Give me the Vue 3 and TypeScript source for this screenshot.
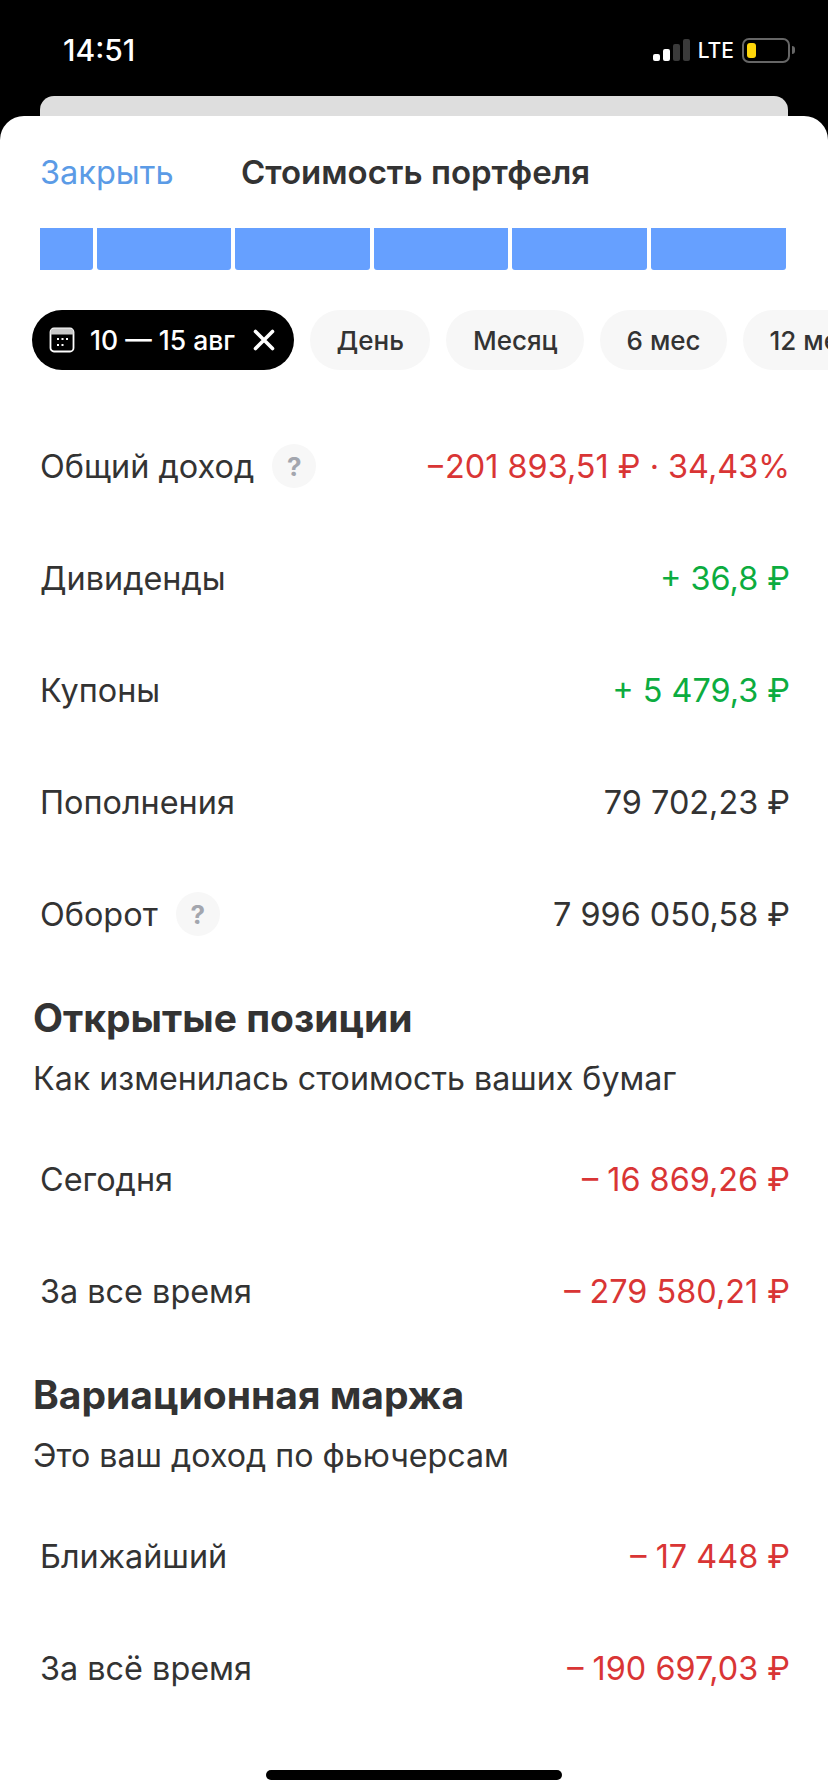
<script setup lang="ts">
interface Row {
  label: string
  value: string
  tone?: 'red' | 'green'
  hint?: boolean
}

interface Section {
  title: string
  text: string
  rows: Row[]
}

const bars = [53, 134, 135, 134, 135, 135]
const periods = ['День', 'Месяц', '6 мес', '12 мес']

const summary: Row[] = [
  { label: 'Общий доход', value: '−201 893,51 ₽ · 34,43%', tone: 'red', hint: true },
  { label: 'Дивиденды', value: '+ 36,8 ₽', tone: 'green' },
  { label: 'Купоны', value: '+ 5 479,3 ₽', tone: 'green' },
  { label: 'Пополнения', value: '79 702,23 ₽' },
  { label: 'Оборот', value: '7 996 050,58 ₽', hint: true }
]

const sections: Section[] = [
  {
    title: 'Открытые позиции',
    text: 'Как изменилась стоимость ваших бумаг',
    rows: [
      { label: 'Сегодня', value: '– 16 869,26 ₽', tone: 'red' },
      { label: 'За все время', value: '– 279 580,21 ₽', tone: 'red' }
    ]
  },
  {
    title: 'Вариационная маржа',
    text: 'Это ваш доход по фьючерсам',
    rows: [
      { label: 'Ближайший', value: '– 17 448 ₽', tone: 'red' },
      { label: 'За всё время', value: '– 190 697,03 ₽', tone: 'red' }
    ]
  }
]
</script>

<template>
  <div class="screen">
    <div class="status">
      <span class="time">14:51</span>
      <div class="status-right">
        <div class="signal">
          <i class="on s1"></i><i class="on s2"></i><i class="s3"></i><i class="s4"></i>
        </div>
        <span class="lte">LTE</span>
        <div class="battery"><div class="charge"></div></div>
        <div class="battery-cap"></div>
      </div>
    </div>

    <div class="back-card"></div>

    <div class="sheet">
      <div class="header">
        <span class="close">Закрыть</span>
        <span class="title">Стоимость портфеля</span>
      </div>

      <div class="bars">
        <div
          v-for="(w, i) in bars"
          :key="i"
          class="bar"
          :style="{ width: w + 'px' }"
        ></div>
      </div>

      <div class="chips">
        <div class="chip chip-active">
          <svg class="cal" width="26" height="26" viewBox="0 0 26 26" fill="none">
            <rect x="1.5" y="1.5" width="23" height="23" rx="3.5" stroke="#fff" stroke-width="1.8" />
            <path d="M1.5 5a3.5 3.5 0 0 1 3.5-3.5h16a3.5 3.5 0 0 1 3.5 3.5v2.5h-23z" fill="#c9c9c9" />
            <g fill="#fff">
              <rect x="8" y="11" width="2" height="2" />
              <rect x="12.5" y="11" width="2" height="2" />
              <rect x="17" y="11" width="2" height="2" />
              <rect x="8" y="17" width="2" height="2" />
              <rect x="12.5" y="17" width="2" height="2" />
            </g>
          </svg>
          <span>10 — 15 авг</span>
          <svg class="cross" width="22" height="22" viewBox="0 0 22 22" fill="none">
            <path d="M2.5 2.5l17 17M19.5 2.5l-17 17" stroke="#fff" stroke-width="3.6" stroke-linecap="round" />
          </svg>
        </div>
        <div v-for="p in periods" :key="p" class="chip">{{ p }}</div>
      </div>

      <div class="rows">
        <div v-for="row in summary" :key="row.label" class="row">
          <div class="row-label">
            <span>{{ row.label }}</span>
            <span v-if="row.hint" class="hint">?</span>
          </div>
          <span class="row-value" :class="row.tone">{{ row.value }}</span>
        </div>
      </div>

      <div v-for="s in sections" :key="s.title" class="section">
        <h2 class="section-title">{{ s.title }}</h2>
        <p class="section-text">{{ s.text }}</p>
        <div class="rows">
          <div v-for="row in s.rows" :key="row.label" class="row">
            <div class="row-label">
              <span>{{ row.label }}</span>
            </div>
            <span class="row-value" :class="row.tone">{{ row.value }}</span>
          </div>
        </div>
      </div>

      <div class="home"></div>
    </div>
  </div>
</template>

<style>
html,
body {
  margin: 0;
  background: #000;
}
</style>

<style scoped>
.screen {
  width: 828px;
  height: 1792px;
  overflow: hidden;
  background: #000;
  display: flex;
  flex-direction: column;
  font-family: Inter, "Liberation Sans", sans-serif;
  color: #333;
}

.status {
  height: 96px;
  box-sizing: border-box;
  padding: 30px 33px 0 63px;
  display: flex;
  justify-content: space-between;
  align-items: flex-start;
  color: #fff;
}

.time {
  font-size: 30px;
  font-weight: 500;
  line-height: 40px;
}

.status-right {
  display: flex;
  align-items: center;
  height: 32px;
  margin-top: 4px;
}

.signal {
  display: flex;
  align-items: flex-end;
  gap: 3px;
  height: 22px;
  margin-right: 8px;
}

.signal i {
  display: block;
  width: 7px;
  border-radius: 2px;
  background: #3a3a3a;
}

.signal i.on {
  background: #fff;
}

.s1 {
  height: 7px;
}

.s2 {
  height: 12px;
}

.s3 {
  height: 17px;
}

.s4 {
  height: 22px;
}

.lte {
  font-size: 21px;
  font-weight: 500;
  margin-right: 8px;
}

.battery {
  width: 48px;
  height: 25px;
  box-sizing: border-box;
  border: 2px solid #666;
  border-radius: 7px;
  padding: 3px;
}

.charge {
  width: 9px;
  height: 15px;
  border-radius: 3px;
  background: #ffd60a;
}

.battery-cap {
  width: 3px;
  height: 8px;
  margin-left: 2px;
  border-radius: 0 3px 3px 0;
  background: #666;
}

.back-card {
  height: 20px;
  margin: 0 40px 0 40px;
  background: #dedede;
  border-radius: 14px 14px 0 0;
  flex: none;
}

.sheet {
  flex: 1;
  background: #fff;
  border-radius: 24px 24px 0 0;
  overflow: hidden;
  position: relative;
}

.header {
  display: flex;
  align-items: center;
  height: 40px;
  margin-top: 36px;
  padding-left: 40px;
  font-size: 32.5px;
}

.close {
  color: #5b9be6;
  width: 201px;
}

.title {
  font-size: 33px;
  font-weight: 600;
  color: #333;
}

.bars {
  display: flex;
  gap: 4px;
  margin: 36px 0 0 40px;
}

.bar {
  height: 42px;
  background: #66a0ff;
  border-radius: 0 0 3px 3px;
  flex: none;
}

.bar:first-child {
  border-radius: 0 0 3px 0;
}

.chips {
  display: flex;
  gap: 16px;
  margin-top: 40px;
  padding-left: 32px;
  white-space: nowrap;
}

.chip {
  height: 60px;
  flex: none;
  display: flex;
  align-items: center;
  padding: 0 26.5px;
  border-radius: 30px;
  background: #f7f7f7;
  font-size: 26px;
  font-weight: 500;
  color: #333;
}

.chip-active {
  background: #000;
  color: #fff;
  padding: 0 19px 0 17px;
  width: 262px;
  box-sizing: border-box;
  font-size: 26.5px;
}

.cal {
  margin-right: 15px;
  flex: none;
}

.cross {
  margin-left: auto;
  flex: none;
}

.rows {
  display: flex;
  flex-direction: column;
}

.chips + .rows {
  margin-top: 40px;
}

.row {
  height: 112px;
  display: flex;
  justify-content: space-between;
  align-items: center;
  padding: 0 38px 0 40px;
  font-size: 32.4px;
}

.row-label {
  display: flex;
  align-items: center;
  gap: 18px;
}

.hint {
  width: 44px;
  height: 44px;
  border-radius: 50%;
  background: #f7f7f7;
  color: #a3a6ae;
  font-size: 26px;
  font-weight: 700;
  display: flex;
  align-items: center;
  justify-content: center;
}

.row-value.red {
  color: #d93535;
}

.row-value.green {
  color: #0cac3f;
}

.section {
  padding-top: 26px;
}

.section-title {
  margin: 0;
  padding-left: 33px;
  font-size: 39px;
  line-height: 44px;
  font-weight: 700;
  color: #333;
}

.section-text {
  margin: 19px 0 24px;
  padding-left: 33px;
  font-size: 32.2px;
  line-height: 40px;
  color: #333;
}

.home {
  position: absolute;
  left: 266px;
  bottom: 12px;
  width: 296px;
  height: 10px;
  border-radius: 5px;
  background: #000;
}
</style>
